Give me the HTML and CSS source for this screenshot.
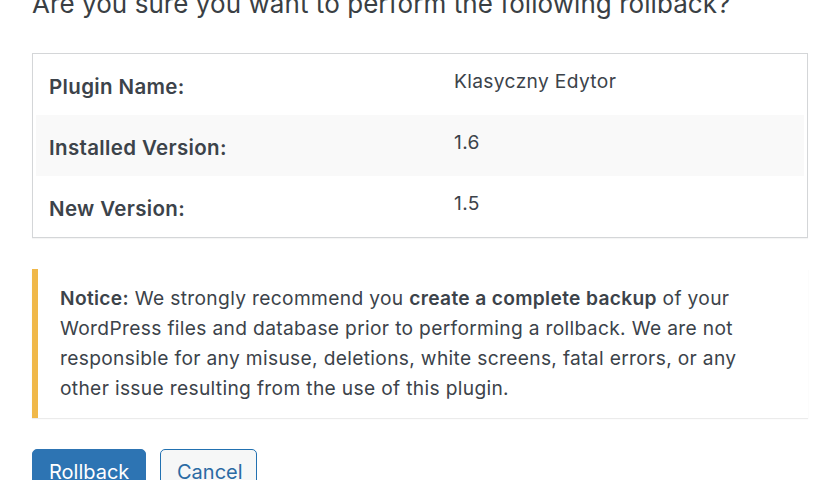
FILE: index.html
```html
<!DOCTYPE html>
<html lang="en">
<head>
<meta charset="utf-8">
<title>Rollback</title>
<link rel="stylesheet" href="styles.css">
</head>
<body>
<div class="wrap">
  <h2 class="title">Are you sure you want to perform the following rollback?</h2>
  <div class="box">
    <table class="info">
      <tr>
        <th>Plugin Name:</th>
        <td>Klasyczny Edytor</td>
      </tr>
      <tr class="alt">
        <th>Installed Version:</th>
        <td>1.6</td>
      </tr>
      <tr>
        <th>New Version:</th>
        <td>1.5</td>
      </tr>
    </table>
  </div>
  <div class="notice">
    <p><strong>Notice:</strong> We strongly recommend you <strong>create a complete backup</strong> of your WordPress files and database prior to performing a rollback. We are not responsible for any misuse, deletions, white screens, fatal errors, or any other issue resulting from the use of this plugin.</p>
  </div>
  <div class="actions">
    <button class="btn btn-primary">Rollback</button>
    <button class="btn btn-secondary">Cancel</button>
  </div>
</div>
</body>
</html>
```
FILE: styles.css
```css
html, body {
  margin: 0;
  padding: 0;
  background: #ffffff;
  overflow: hidden;
}
body {
  font-family: Inter, "Noto Sans", "Liberation Sans", sans-serif;
  color: #3c434a;
}
.wrap {
  padding: 0 32px;
}
.title {
  margin: -13px 0 32px;
  font-size: 26px;
  line-height: 34px;
  font-weight: 400;
  color: #3a3f44;
  white-space: nowrap;
  letter-spacing: 0.06px;
}
.box {
  border: 1px solid #d4d6d8;
  box-shadow: 0 1px 1px rgba(0,0,0,0.04);
  padding: 0 3px;
}
.info {
  width: 100%;
  border-collapse: collapse;
}
.info tr {
  height: 61px;
}
.info tr.alt {
  background: #f9f9f9;
}
.info th {
  width: 405px;
  text-align: left;
  vertical-align: top;
  padding: 20px 0 0 13px;
  font-size: 20.5px;
  line-height: 26px;
  font-weight: 600;
  letter-spacing: 0.35px;
  color: #3c434a;
}
.info td {
  vertical-align: top;
  padding: 14px 0 0 0;
  font-size: 19.2px;
  line-height: 26px;
  letter-spacing: 0.35px;
  color: #3c434a;
}
.notice {
  margin-top: 31px;
  border-left: 6px solid #f0b849;
  background: #ffffff;
  box-shadow: 0 1px 1px rgba(0,0,0,0.08);
  padding: 14px 20px 15px 22px;
}
.notice p {
  margin: 0;
  max-width: 690px;
  font-size: 19.2px;
  line-height: 30px;
  letter-spacing: 0.33px;
}
.notice strong {
  font-weight: 600;
}
.actions {
  display: flex;
  gap: 14px;
  margin-top: 31px;
}
.btn {
  font-family: Inter, "Noto Sans", "Liberation Sans", sans-serif;
  font-size: 20px;
  line-height: 44px;
  height: 46px;
  padding: 0 16px;
  border-radius: 5px;
  border: 1px solid #2271b1;
  cursor: pointer;
}
.btn-primary {
  background: #2d74b3;
  color: #ffffff;
  border-color: #2d74b3;
  width: 114px;
}
.btn-secondary {
  background: #f6f7f7;
  color: #2a6aa3;
  width: 97px;
}
```
